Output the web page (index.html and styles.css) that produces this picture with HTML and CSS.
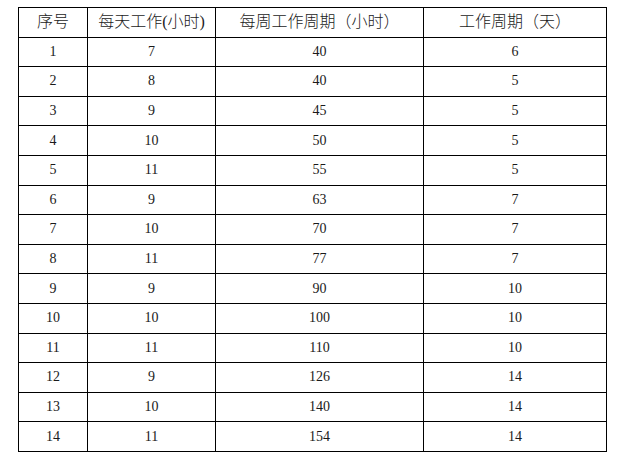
FILE: index.html
```html
<!DOCTYPE html>
<html lang="zh">
<head>
<meta charset="utf-8">
<link rel="stylesheet" href="styles.css">
</head>
<body>
<table class="hours">
  <colgroup>
    <col class="c1"><col class="c2"><col class="c3"><col class="c4">
  </colgroup>
  <thead>
    <tr><th>序号</th><th>每天工作(小时)</th><th>每周工作周期（小时）</th><th>工作周期（天）</th></tr>
  </thead>
  <tbody>
    <tr><td>1</td><td>7</td><td>40</td><td>6</td></tr>
    <tr><td>2</td><td>8</td><td>40</td><td>5</td></tr>
    <tr><td>3</td><td>9</td><td>45</td><td>5</td></tr>
    <tr><td>4</td><td>10</td><td>50</td><td>5</td></tr>
    <tr><td>5</td><td>11</td><td>55</td><td>5</td></tr>
    <tr><td>6</td><td>9</td><td>63</td><td>7</td></tr>
    <tr><td>7</td><td>10</td><td>70</td><td>7</td></tr>
    <tr><td>8</td><td>11</td><td>77</td><td>7</td></tr>
    <tr><td>9</td><td>9</td><td>90</td><td>10</td></tr>
    <tr><td>10</td><td>10</td><td>100</td><td>10</td></tr>
    <tr><td>11</td><td>11</td><td>110</td><td>10</td></tr>
    <tr><td>12</td><td>9</td><td>126</td><td>14</td></tr>
    <tr><td>13</td><td>10</td><td>140</td><td>14</td></tr>
    <tr><td>14</td><td>11</td><td>154</td><td>14</td></tr>
  </tbody>
</table>
</body>
</html>
```
FILE: styles.css
```css
html, body {
  margin: 0;
  padding: 0;
  background: #fff;
}
body {
  padding: 7px 0 0 18px;
}
.hours {
  border-collapse: collapse;
  table-layout: fixed;
  width: 588px;
  font-family: "Liberation Serif", "Noto Sans CJK SC", serif;
  color: #1a1a1a;
}
.c1 { width: 69px; }
.c2 { width: 128px; }
.c3 { width: 208px; }
.c4 { width: 183px; }
.hours tr {
  height: 29.6px;
}
.hours th,
.hours td {
  border: 1px solid #000;
  padding: 0;
  text-align: center;
  vertical-align: middle;
  line-height: 1;
}
.hours th {
  font-weight: 300;
  font-size: 16px;
}
.hours td {
  font-size: 14px;
}
```
